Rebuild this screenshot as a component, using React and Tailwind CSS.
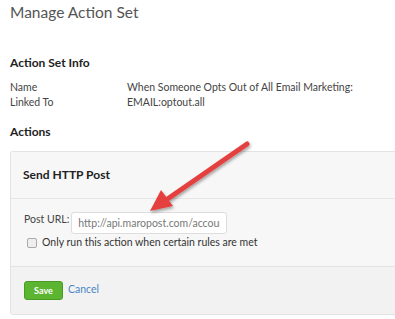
import React from 'react';

function Arrow() {
  return (
    <svg className="absolute left-0 top-0 pointer-events-none" width="395" height="319">
      <defs>
        <filter id="sh" x="-20%" y="-20%" width="140%" height="140%">
          <feDropShadow dx="1" dy="2" stdDeviation="1.5" floodColor="#000" floodOpacity="0.35" />
        </filter>
      </defs>
      <g filter="url(#sh)">
        <line x1="247" y1="144" x2="166" y2="200" stroke="#e5403f" strokeWidth="5" strokeLinecap="round" />
        <polygon points="150,211 161,190 173,206" fill="#e5403f" />
      </g>
    </svg>
  );
}

export default function App() {
  return (
    <div className="relative w-[395px] h-[319px] overflow-hidden bg-white text-[#333] font-['Lato',sans-serif]">
      <div className="pl-[10px] pt-[2px]">
        <h1 className="text-[15.5px] text-[#555] leading-[20px]">Manage Action Set</h1>

        <h2 className="mt-[33px] text-[12px] font-bold text-[#222] leading-[16px]">Action Set Info</h2>
        <div className="mt-[9px] text-[10.5px] leading-[15px] text-[#444]">
          <div className="flex">
            <span className="w-[117px]">Name</span>
            <span>When Someone Opts Out of All Email Marketing:</span>
          </div>
          <div className="flex">
            <span className="w-[117px]">Linked To</span>
            <span>EMAIL:optout.all</span>
          </div>
        </div>

        <h2 className="mt-[14px] text-[12px] font-bold text-[#222] leading-[16px]">Actions</h2>

        <div className="mt-[11px] border border-[#e3e3e3] rounded-l-[3px] border-r-0">
          <div className="bg-[#f7f7f7] h-[47px] flex items-center pl-[12px] border-b border-[#e6e6e6]">
            <span className="text-[12px] font-bold text-[#222]">Send HTTP Post</span>
          </div>
          <div className="bg-[#f7f7f7] pl-[13px] pt-[12px] pb-[15px] border-b border-[#e3e3e3]">
            <div className="flex items-start">
              <span className="text-[10.5px] text-[#444] mt-[1px]">Post URL:</span>
              <input
                readOnly
                value="http://api.maropost.com/accounts"
                className="ml-[2px] mt-[1px] w-[156px] h-[22px] bg-white border border-[#ddd] rounded-[3px] px-[6px] text-[10.5px] text-[#777] outline-none"
              />
            </div>
            <label className="flex items-center mt-[1px] ml-[3px]">
              <span className="w-[10px] h-[10px] border border-[#aaa] rounded-[2px] bg-[#eee]" />
              <span className="ml-[5px] text-[10.5px] text-[#333]">Only run this action when certain rules are met</span>
            </label>
          </div>
          <div className="bg-[#f2f2f2] h-[47px] flex items-center pl-[13px]">
            <button className="w-[39px] h-[19px] rounded-[3px] bg-[#5cb531] border border-[#4a9a26] text-white text-[9px] font-bold">Save</button>
            <span className="ml-[5px] text-[10.5px] text-[#4a86c5]">Cancel</span>
          </div>
        </div>
      </div>
      <Arrow />
    </div>
  );
}
